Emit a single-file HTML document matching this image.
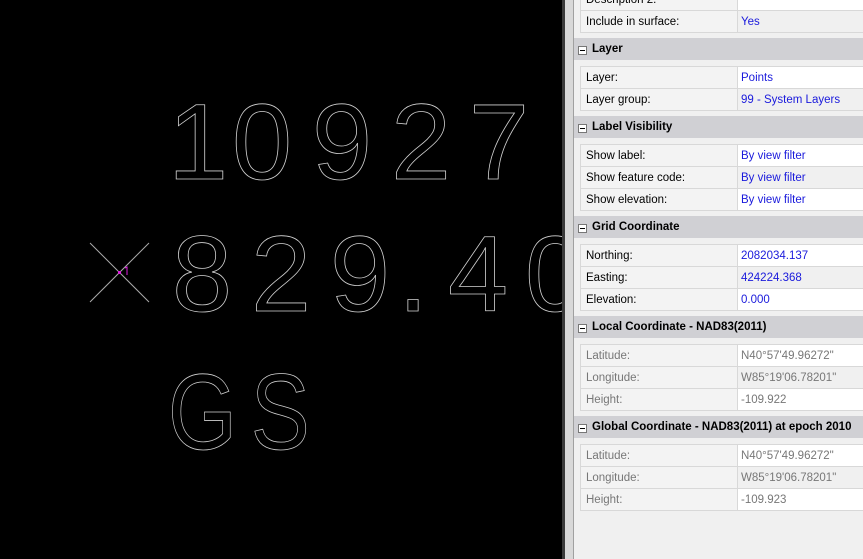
<!DOCTYPE html>
<html><head><style>
body{margin:0;width:863px;height:559px;overflow:hidden;background:#000;font-family:"Liberation Sans",sans-serif;position:relative}
#cad{position:absolute;left:0;top:0;width:562px;height:559px;background:#000;overflow:hidden}
#bar1{position:absolute;left:562px;top:0;width:3px;height:559px;background:#3a3a3a}
#bar2{position:absolute;left:565px;top:0;width:8px;height:559px;background:#d8d8d8;border-right:1px solid #a0a0a0}
#panel{position:absolute;left:574px;top:0;width:289px;height:559px;background:#f0f0f0;font-size:11.5px;color:#000}
.row{position:absolute;left:6px;width:283px;height:21px;border-top:1px solid #d8d8d8}
.row .l{position:absolute;left:0;top:0;width:158px;height:21px;background:#f3f3f3;border-left:1px solid #d8d8d8;border-right:1px solid #d8d8d8;padding-left:5px;line-height:22px;box-sizing:border-box}
.row .v{position:absolute;left:158px;top:0;right:0;height:21px;background:#fff;padding-left:3px;line-height:22px;color:#1a1adc;box-sizing:border-box}
.row.bot{border-bottom:1px solid #d8d8d8}
.g .l{color:#777}.g .v{color:#777}
.gv .v{background:#f0f0f0}
.hdr{position:absolute;left:0;width:289px;height:22px;background:#d0d0d4;font-weight:bold;line-height:22px;padding-left:18px;box-sizing:border-box}
.hdr:before{content:"";position:absolute;left:4px;top:8px;width:7px;height:7px;border:1px solid #777;background:#fff}
.hdr:after{content:"";position:absolute;left:6px;top:12px;width:5px;height:1px;background:#000}
</style></head><body>
<div id="cad">
<svg width="562" height="559" style="position:absolute;left:0;top:0">
<g fill="none" stroke="#d0d0d0" stroke-width="0.8" font-family="Liberation Sans" font-size="108">
<text x="168 232 312 391 469" y="179">10927</text>
<text x="172 251 330 398 448 525" y="311">829.40</text>
<g transform="translate(168,449) scale(0.82,1)"><text x="0 101" y="0">GS</text></g>
</g>
<line x1="90" y1="243" x2="149" y2="302" stroke="#aaa" stroke-width="1"/>
<line x1="149" y1="243" x2="90" y2="302" stroke="#aaa" stroke-width="1"/>
<rect x="118" y="271" width="3" height="3" fill="#e020e0"/>
<path d="M125 268 L127 267 L127 275" stroke="#e020e0" fill="none"/>
</svg>
</div>
<div id="bar1"></div><div id="bar2"></div>
<div id="panel">
<div class="row" style="top:-12px"><div class="l">Description 2:</div><div class="v"></div></div>
<div class="row bot gv" style="top:10px"><div class="l">Include in surface:</div><div class="v">Yes</div></div>
<div class="hdr" style="top:38px">Layer</div>
<div class="row" style="top:66px"><div class="l">Layer:</div><div class="v">Points</div></div>
<div class="row bot gv" style="top:88px"><div class="l">Layer group:</div><div class="v">99 - System Layers</div></div>
<div class="hdr" style="top:116px">Label Visibility</div>
<div class="row" style="top:144px"><div class="l">Show label:</div><div class="v">By view filter</div></div>
<div class="row gv" style="top:166px"><div class="l">Show feature code:</div><div class="v">By view filter</div></div>
<div class="row bot" style="top:188px"><div class="l">Show elevation:</div><div class="v">By view filter</div></div>
<div class="hdr" style="top:216px">Grid Coordinate</div>
<div class="row" style="top:244px"><div class="l">Northing:</div><div class="v">2082034.137</div></div>
<div class="row gv" style="top:266px"><div class="l">Easting:</div><div class="v">424224.368</div></div>
<div class="row bot" style="top:288px"><div class="l">Elevation:</div><div class="v">0.000</div></div>
<div class="hdr" style="top:316px">Local Coordinate - NAD83(2011)</div>
<div class="row g" style="top:344px"><div class="l">Latitude:</div><div class="v">N40°57'49.96272"</div></div>
<div class="row g gv" style="top:366px"><div class="l">Longitude:</div><div class="v">W85°19'06.78201"</div></div>
<div class="row g bot" style="top:388px"><div class="l">Height:</div><div class="v">-109.922</div></div>
<div class="hdr" style="top:416px">Global Coordinate - NAD83(2011) at epoch 2010</div>
<div class="row g" style="top:444px"><div class="l">Latitude:</div><div class="v">N40°57'49.96272"</div></div>
<div class="row g gv" style="top:466px"><div class="l">Longitude:</div><div class="v">W85°19'06.78201"</div></div>
<div class="row g bot" style="top:488px"><div class="l">Height:</div><div class="v">-109.923</div></div>
</div>
</body></html>
